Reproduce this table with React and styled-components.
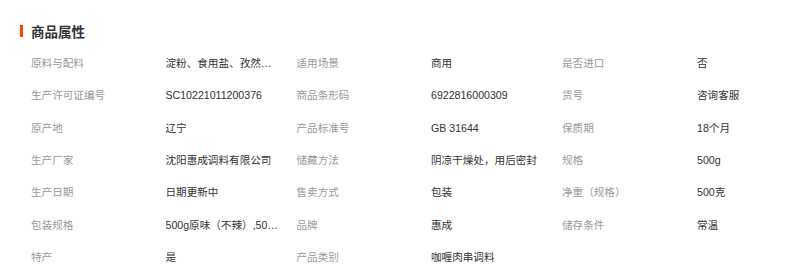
import React from 'react';
import styled, { createGlobalStyle } from 'styled-components';

const GlobalStyle = createGlobalStyle`
  html, body {
    margin: 0;
    padding: 0;
    background: #fff;
  }
  body {
    font-family: "Liberation Sans", Arial, "Noto Sans CJK SC", sans-serif;
  }
`;

const Panel = styled.section`
  width: 809px;
  height: 276px;
  box-sizing: border-box;
  padding: 20px 0 0 20px;
  overflow: hidden;
`;

const Title = styled.h3`
  margin: 0;
  display: flex;
  align-items: center;
  gap: 8px;
  height: 22px;
  font-size: 13.5px;
  font-weight: 700;
  color: #333;

  &::before {
    content: '';
    display: block;
    width: 3px;
    height: 12px;
    background: #ff4400;
  }
`;

const AttrGrid = styled.dl`
  margin: 4.75px 0 0 11px;
  display: grid;
  grid-template-columns: 134.5px 131px 134.5px 131px 135px 1fr;
  grid-auto-rows: 32.4px;
  font-size: 10.6px;
  line-height: 32.4px;
`;

const Label = styled.dt`
  margin: 0;
  color: #999;
  white-space: nowrap;
`;

const Value = styled.dd`
  margin: 0;
  color: #333;
  max-width: 113px;
  white-space: nowrap;
  overflow: hidden;
  text-overflow: ellipsis;
`;

const attrs = [
  ['原料与配料', '淀粉、食用盐、孜然粉、辣椒粉、咖喱粉'],
  ['适用场景', '商用'],
  ['是否进口', '否'],
  ['生产许可证编号', 'SC10221011200376'],
  ['商品条形码', '6922816000309'],
  ['货号', '咨询客服'],
  ['原产地', '辽宁'],
  ['产品标准号', 'GB 31644'],
  ['保质期', '18个月'],
  ['生产厂家', '沈阳惠成调料有限公司'],
  ['储藏方法', '阴凉干燥处，用后密封'],
  ['规格', '500g'],
  ['生产日期', '日期更新中'],
  ['售卖方式', '包装'],
  ['净重（规格）', '500克'],
  ['包装规格', '500g原味（不辣）,500g微辣'],
  ['品牌', '惠成'],
  ['储存条件', '常温'],
  ['特产', '是'],
  ['产品类别', '咖喱肉串调料'],
];

export default function App() {
  return (
    <>
      <GlobalStyle />
      <Panel>
        <Title>商品属性</Title>
        <AttrGrid>
          {attrs.map(([label, value]) => (
            <React.Fragment key={label}>
              <Label>{label}</Label>
              <Value title={value}>{value}</Value>
            </React.Fragment>
          ))}
        </AttrGrid>
      </Panel>
    </>
  );
}
